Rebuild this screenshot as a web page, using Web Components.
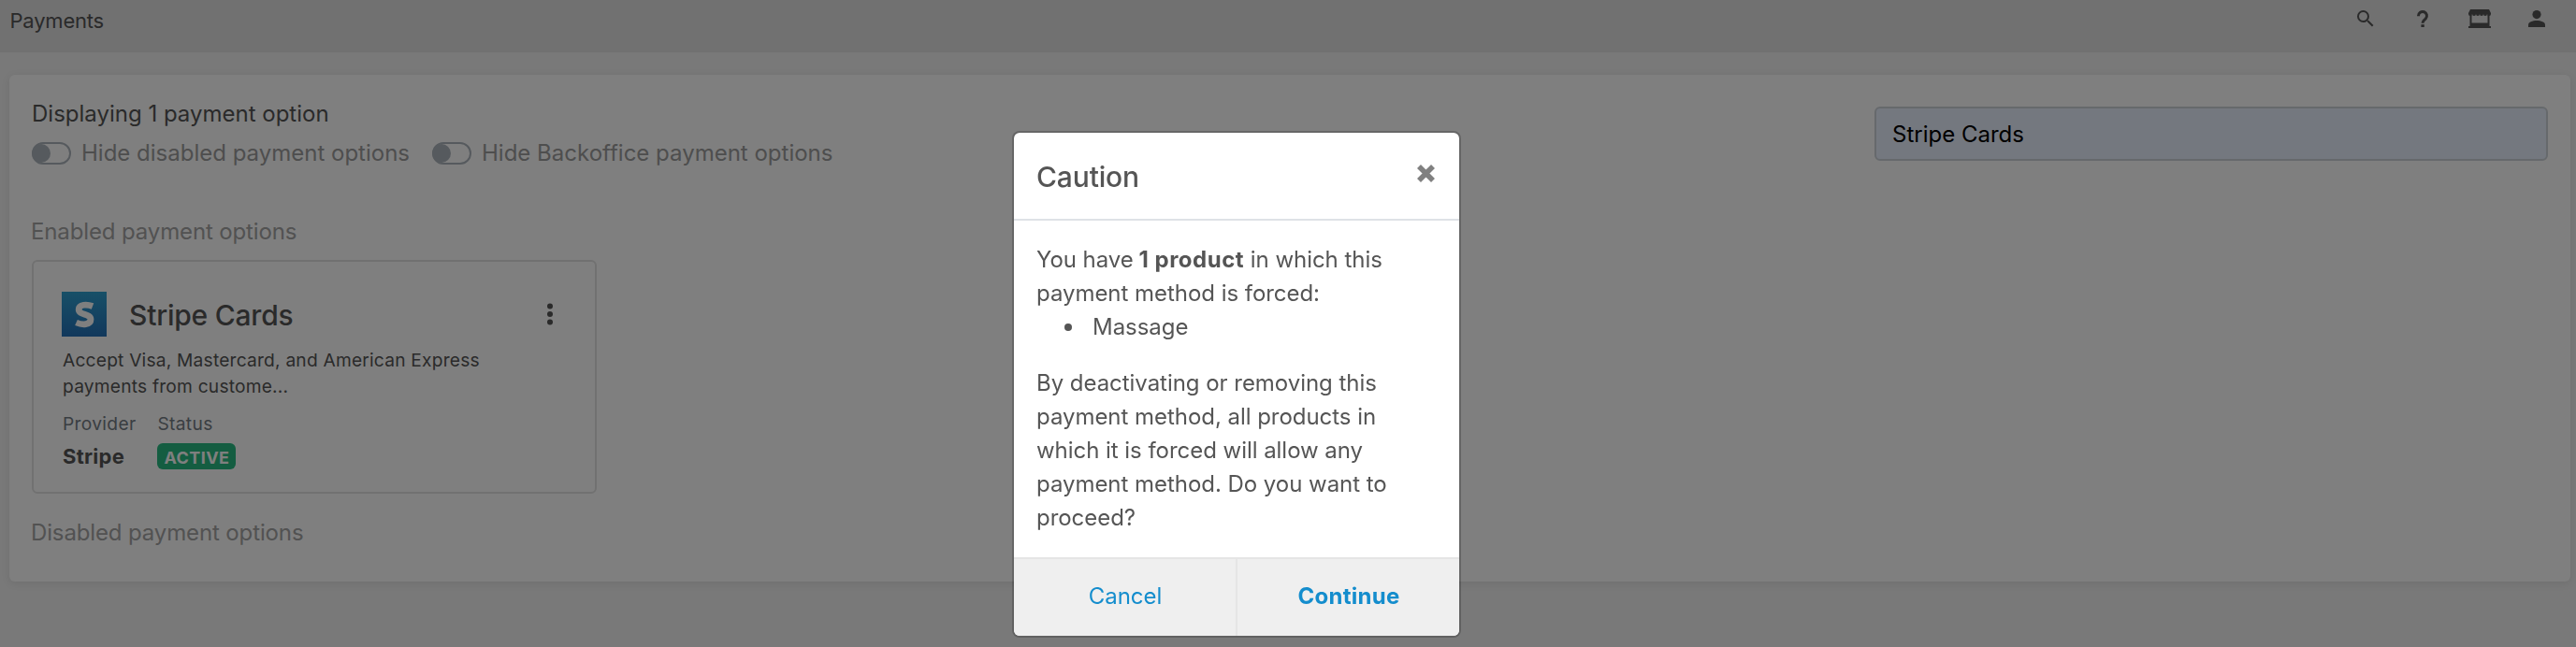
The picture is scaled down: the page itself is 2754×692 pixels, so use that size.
<!DOCTYPE html>
<html lang="en">
<head>
<meta charset="utf-8">
<title>Payments</title>
<style>
body {
    margin: 0;
    height: 692px;
    overflow: hidden;
    background: #f2f2f2;
    color: #555;
    font: 24px/36px Inter, "Liberation Sans", sans-serif;
}
</style>
</head>
<body>
<top-bar>Payments</top-bar>
<payments-panel>
    <span slot="title">Displaying 1 payment option</span>
    <toggle-switch slot="filters">Hide disabled payment options</toggle-switch>
    <toggle-switch slot="filters">Hide Backoffice payment options</toggle-switch>
    <search-field slot="search" value="Stripe Cards"></search-field>
    <section-title>Enabled payment options</section-title>
    <payment-card provider="Stripe" status="ACTIVE">
        <span slot="name">Stripe Cards</span>
        Accept Visa, Mastercard, and American Express payments from custome...
    </payment-card>
    <section-title>Disabled payment options</section-title>
</payments-panel>
<modal-dialog>
    <span slot="title">Caution</span>
    <dialog-message></dialog-message>
    <dialog-button slot="actions">Cancel</dialog-button>
    <dialog-button slot="actions" primary>Continue</dialog-button>
</modal-dialog>

<script>
function define(name, html, setup) {
    const template = document.createElement('template');
    template.innerHTML = html;

    window.customElements.define(name, class extends HTMLElement {
        constructor() {
            super();
            this.attachShadow({mode: 'open'});
            this.shadowRoot.appendChild(template.content.cloneNode(true));
            if (setup) setup(this, this.shadowRoot);
        }
    });
}

define('top-bar', `
<style>
:host {
    display: flex;
    justify-content: space-between;
    align-items: flex-start;
    box-sizing: border-box;
    height: 56px;
    padding: 4px 30px 0 10.5px;
    background: #e2e2e2;
    font-size: 22px;
    letter-spacing: -0.2px;
}
nav {
    display: flex;
    gap: 37px;
    padding-top: 4px;
}
svg {
    display: block;
    width: 24px;
    height: 24px;
    fill: currentColor;
}
</style>
<span><slot></slot></span>
<nav>
    <svg viewBox="0 0 24 24"><path d="M15.5 14h-.79l-.28-.27A6.47 6.47 0 0 0 16 9.5 6.5 6.5 0 1 0 9.5 16c1.61 0 3.09-.59 4.23-1.57l.27.28v.79l5 4.99L20.49 19l-4.99-5zm-6 0a4.5 4.5 0 1 1 0-9 4.5 4.5 0 0 1 0 9z"/></svg>
    <svg viewBox="0 0 24 24"><path d="M7.5 9.2V9a4.5 4.5 0 1 1 7.8 3c-1.6 1.7-3.3 2.3-3.3 4.8" fill="none" stroke="currentColor" stroke-width="3"/><path d="M10.4 18.2h3.4V21h-3.4z"/></svg>
    <svg viewBox="0 0 24 24"><path d="M2 2h20l2 4v1a2 2 0 0 1-4 0 2 2 0 0 1-4 0 2 2 0 0 1-4 0 2 2 0 0 1-4 0 2 2 0 0 1-4 0 2 2 0 0 1-4 0V6z"/><path d="M1.500 8h2v8.500h17V8h2v12H24v2H0v-2h1.500z"/></svg>
    <svg viewBox="0 0 24 24"><circle cx="12" cy="7.600" r="4.600"/><path d="M3 21v-2.500c0-3 4.500-4.500 9-4.500s9 1.500 9 4.500V21z"/></svg>
</nav>`);

define('payments-panel', `
<style>
:host {
    display: block;
    box-sizing: border-box;
    height: 542px;
    margin: 24px 6px 0 10px;
    padding: 24px;
    border-radius: 6px;
    background: #fff;
    box-shadow: 0 2px 10px rgba(0, 0, 0, .09);
}
header {
    display: flex;
    justify-content: space-between;
    height: 126px;
}
.left {
    display: flex;
    flex-direction: column;
    gap: 6px;
}
.filters {
    display: flex;
    gap: 24px;
}
</style>
<header>
    <div class="left">
        <slot name="title"></slot>
        <div class="filters"><slot name="filters"></slot></div>
    </div>
    <slot name="search"></slot>
</header>
<slot></slot>`);

define('toggle-switch', `
<style>
:host {
    display: flex;
    align-items: center;
    gap: 11px;
    color: #9c9c9c;
}
.track {
    box-sizing: border-box;
    width: 42px;
    height: 24px;
    border: 2px solid #adb5bd;
    border-radius: 12px;
    display: flex;
    align-items: center;
}
.knob {
    width: 20px;
    height: 20px;
    margin-left: -2px;
    border-radius: 50%;
    background: #adb5bd;
}
</style>
<div class="track"><div class="knob"></div></div>
<span><slot></slot></span>`);

define('search-field', `
<style>
:host {
    display: block;
    width: 720px;
    padding-top: 10px;
}
input {
    display: block;
    box-sizing: border-box;
    width: 100%;
    height: 58px;
    padding: 0 17px;
    border: 2px solid #ccd2d9;
    border-radius: 6px;
    background: #e8f0fe;
    color: #000;
    font: inherit;
}
</style>
<input type="text">`, (host, root) => {
    root.querySelector('input').value = host.getAttribute('value');
});

define('section-title', `
<style>
:host {
    display: block;
    color: #a4a4a4;
    letter-spacing: -0.13px;
    text-indent: -1px;
}
</style>
<slot></slot>`);

define('payment-card', `
<style>
:host {
    display: block;
    box-sizing: border-box;
    width: 604px;
    height: 250px;
    margin: 12px 0 24px;
    padding: 32px 30px 0;
    border: 2px solid #e2e2e2;
    border-radius: 6px;
    font-size: 19.2px;
    line-height: 28px;
}
.head {
    display: flex;
    align-items: center;
    gap: 24px;
    height: 48px;
}
.name {
    flex: 1;
    padding-top: 2px;
    font-size: 30px;
    font-weight: 500;
    letter-spacing: -0.22px;
}
svg {
    display: block;
}
p {
    margin: 11px 0 12px 1px;
    width: 460px;
    letter-spacing: 0.2px;
}
.facts {
    display: flex;
    gap: 23px;
    padding-left: 1px;
}
.facts > div {
    display: flex;
    flex-direction: column;
    align-items: flex-start;
    gap: 7px;
}
.label {
    color: #747c85;
    letter-spacing: 0.32px;
}
.provider {
    font-size: 22px;
    font-weight: 700;
    letter-spacing: 0.25px;
}
.badge {
    box-sizing: border-box;
    width: 84px;
    padding-top: 2px;
    height: 28px;
    border-radius: 6px;
    background: #28bb82;
    color: #fff;
    font-size: 18px;
    font-weight: 700;
    text-align: center;
    letter-spacing: 0.4px;
}
</style>
<div class="head">
    <svg width="48" height="48" viewBox="0 0 48 48">
        <defs><linearGradient id="blue" x2="0" y2="1"><stop stop-color="#2fa0d0"/><stop offset="1" stop-color="#2470b8"/></linearGradient></defs>
        <path d="M0 0h48v48H0z" fill="url(#blue)"/>
        <path d="M33 15.500C27 13.200 18.200 13.300 18.200 19C18.200 25.500 31 23 31 29.600C31 35.800 22 35.800 15.500 33" fill="none" stroke="#fff" stroke-width="6.800"/>
    </svg>
    <span class="name"><slot name="name"></slot></span>
    <svg width="36" height="36" viewBox="0 0 36 36" fill="currentColor"><circle cx="18" cy="9.500" r="3"/><circle cx="18" cy="18" r="3"/><circle cx="18" cy="26.500" r="3"/></svg>
</div>
<p><slot></slot></p>
<div class="facts">
    <div><span class="label">Provider</span><span class="provider"></span></div>
    <div><span class="label">Status</span><span class="badge"></span></div>
</div>`, (host, root) => {
    root.querySelector('.provider').textContent = host.getAttribute('provider');
    root.querySelector('.badge').textContent = host.getAttribute('status');
});

define('modal-dialog', `
<style>
:host {
    position: fixed;
    inset: 0;
    display: flex;
    justify-content: center;
    align-items: flex-start;
    padding: 140px 110px 0 0;
    background: rgba(0, 0, 0, .5);
}
.dialog {
    box-sizing: border-box;
    width: 480px;
    border: 2px solid rgba(0, 0, 0, .2);
    border-radius: 8px;
    background: #fff;
    background-clip: padding-box;
    overflow: hidden;
}
header {
    display: flex;
    justify-content: space-between;
    padding: 25px 24px 23px;
    border-bottom: 2px solid #dee2e6;
    font-size: 30px;
    line-height: 44px;
    font-weight: 500;
    letter-spacing: -0.15px;
}
header svg {
    display: block;
    margin-top: 8px;
}
.body {
    padding: 24px;
}
footer {
    display: flex;
    height: 82px;
    border-top: 2px solid #e5e5e5;
    background: #efefef;
}
</style>
<div class="dialog">
    <header>
        <slot name="title"></slot>
        <svg width="23" height="21" viewBox="0 0 23 21"><path d="M4 3l15 15m0-15l-15 15" stroke="#808080" stroke-width="5.600"/></svg>
    </header>
    <div class="body"><slot></slot></div>
    <footer><slot name="actions"></slot></footer>
</div>`);

define('dialog-message', `
<style>
:host {
    display: block;
    letter-spacing: -0.04px;
}
b {
    margin-left: -1px;
    letter-spacing: 0.5px;
}
p, ul {
    margin: 0;
}
ul {
    padding: 0;
    margin-bottom: 24px;
    list-style: none;
}
li {
    display: flex;
    align-items: center;
    gap: 22px;
    padding-left: 30px;
}
li::before {
    content: "";
    width: 8px;
    height: 8px;
    border-radius: 50%;
    background: currentColor;
}
</style>
<p><span>You have </span><b>1 product</b><span> in which this</span></p>
<p>payment method is forced:</p>
<ul><li>Massage</li></ul>
<p>By deactivating or removing this payment method, all products in which it is forced will allow any payment method. Do you want to proceed?</p>`);

define('dialog-button', `
<style>
:host {
    flex: 1;
    display: flex;
    justify-content: center;
    align-items: center;
    box-sizing: border-box;
    padding: 0 0 2px 1px;
    color: #148dcd;
}
:host([primary]) {
    border-left: 2px solid #e5e5e5;
    font-weight: 700;
    letter-spacing: 0.25px;
}
</style>
<slot></slot>`);
</script>
</body>
</html>
